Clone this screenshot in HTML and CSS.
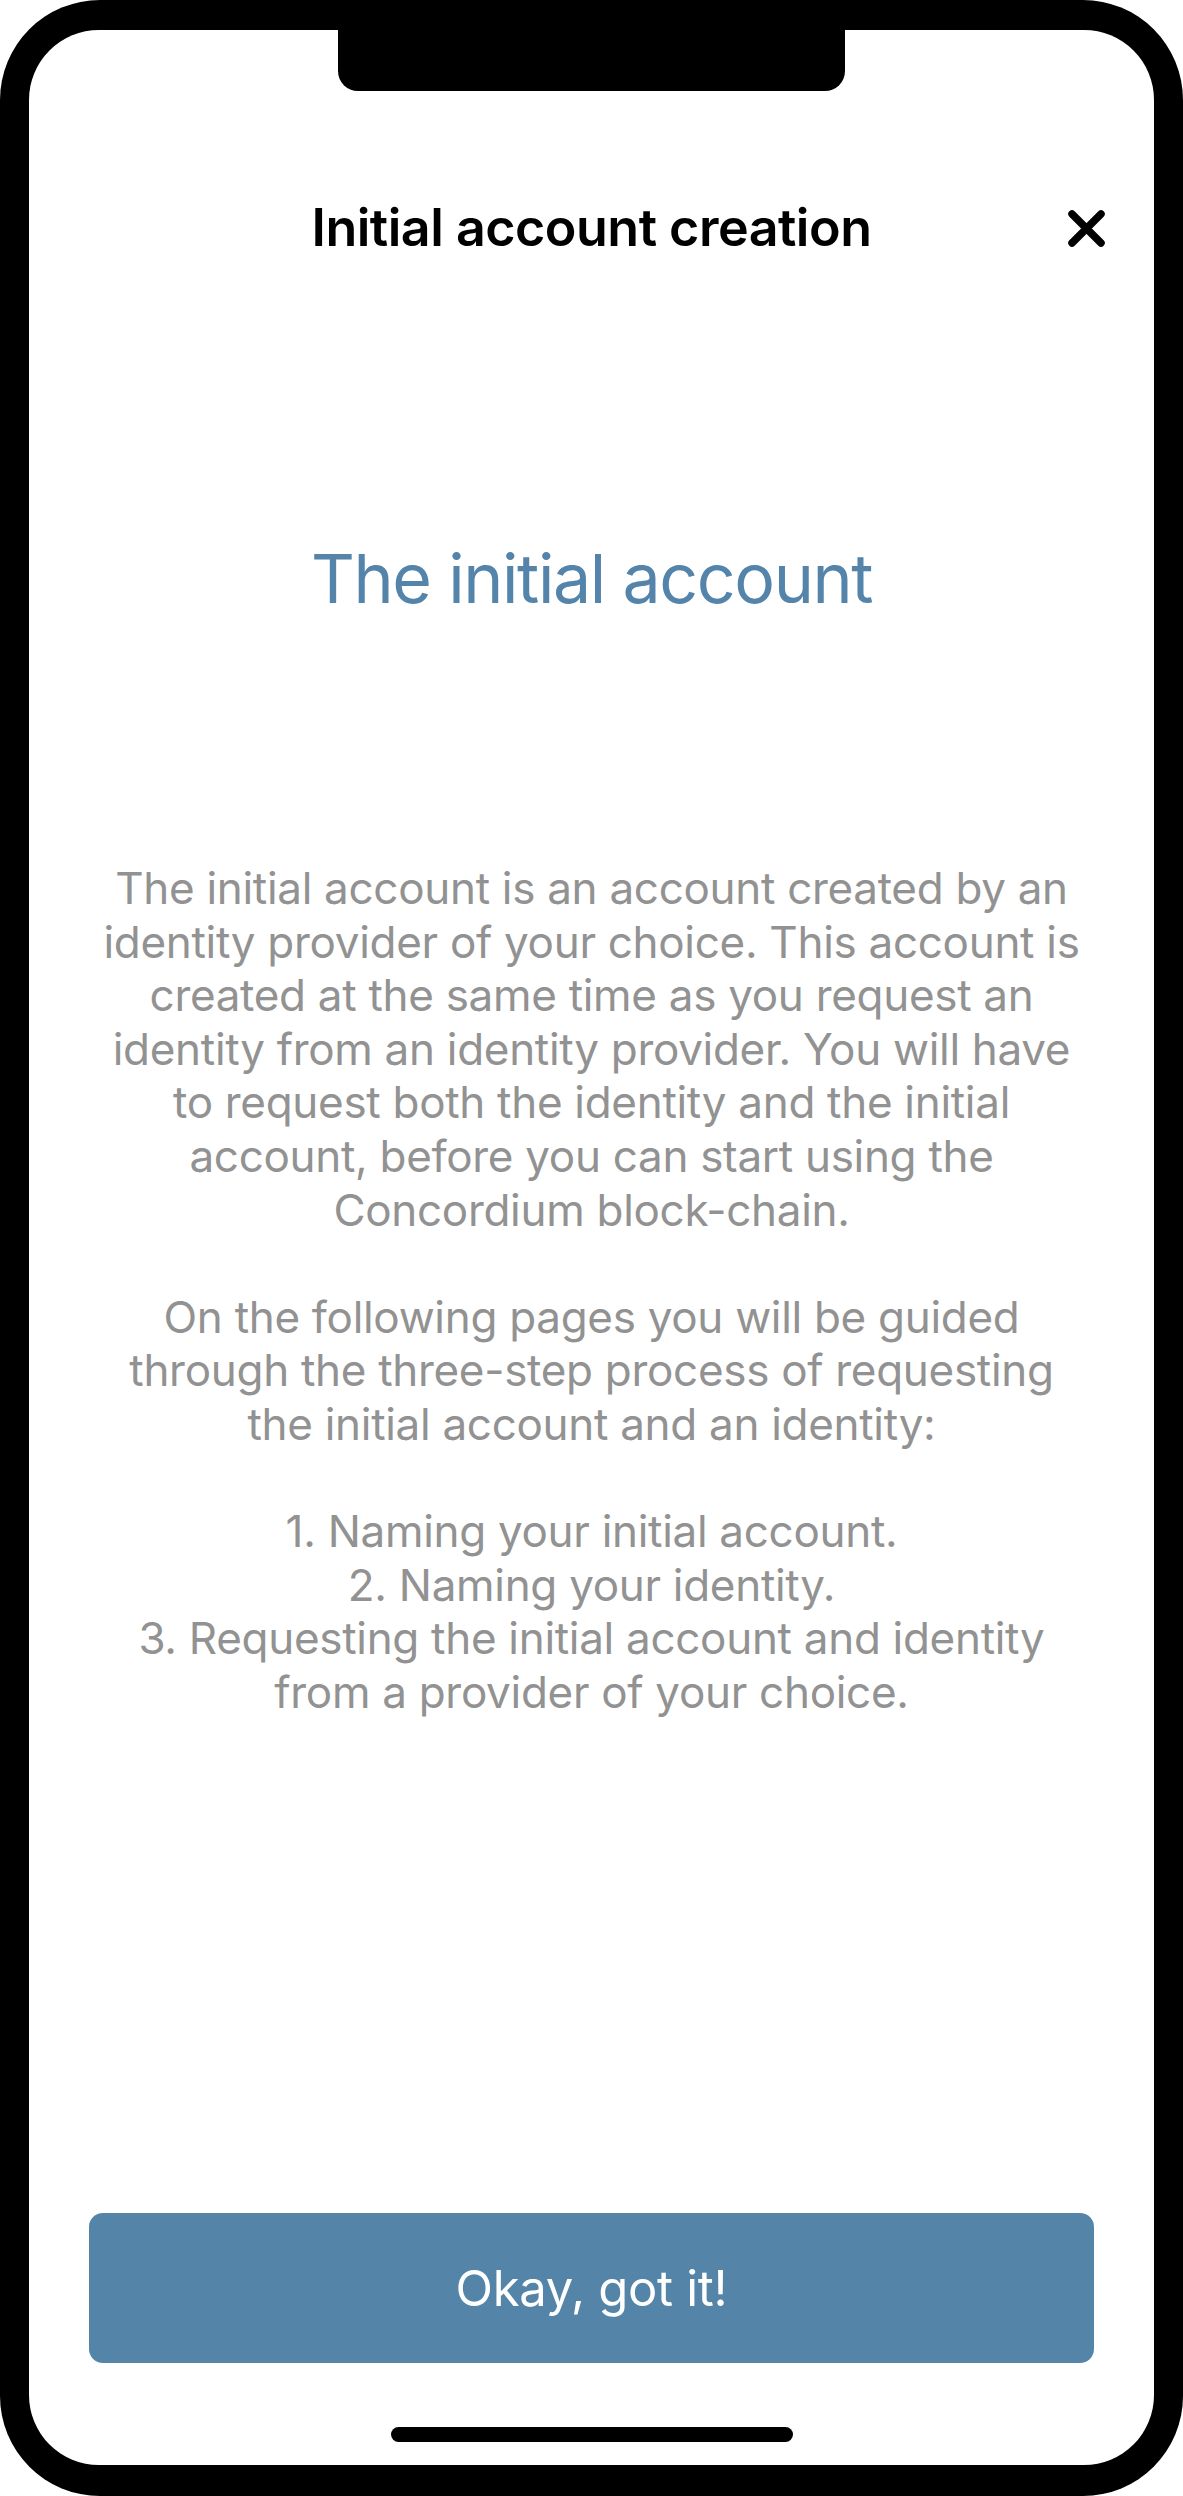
FILE: index.html
```html
<!DOCTYPE html>
<html lang="en">
<head>
<meta charset="utf-8">
<title>Initial account creation</title>
<link rel="stylesheet" href="styles.css">
</head>
<body>
<div class="phone">
  <div class="screen">
    <div class="notch"></div>
    <header class="nav">
      <span></span>
      <h1 class="nav-title">Initial account creation</h1>
      <button class="close" aria-label="Close">
        <svg width="39" height="39" viewBox="0 0 39 39"><path d="M5 5L34 34M34 5L5 34" stroke="#000" stroke-width="7.5" stroke-linecap="round" fill="none"/></svg>
      </button>
    </header>
    <main class="content">
      <h2 class="heading">The initial account</h2>
      <p class="body-text">The initial account is an account created by an<br>identity provider of your choice. This account is<br>created at the same time as you request an<br>identity from an identity provider. You will have<br>to request both the identity and the initial<br>account, before you can start using the<br>Concordium block-chain.<br><br>On the following pages you will be guided<br>through the three-step process of requesting<br>the initial account and an identity:<br><br>1. Naming your initial account.<br>2. Naming your identity.<br>3. Requesting the initial account and identity<br>from a provider of your choice.</p>
    </main>
    <footer class="footer">
      <button class="primary">Okay, got it!</button>
    </footer>
    <div class="home-indicator"></div>
  </div>
</div>
</body>
</html>
```
FILE: styles.css
```css
html, body {
  margin: 0;
  padding: 0;
  background: #fff;
}
body {
  width: 1183px;
  height: 2496px;
  font-family: "Inter", "Noto Sans", sans-serif;
}
.phone {
  box-sizing: border-box;
  width: 1183px;
  height: 2496px;
  background: #000;
  border-radius: 100px;
  padding: 30px 29px 31px 29px;
}
.screen {
  position: relative;
  height: 100%;
  background: #fff;
  border-radius: 70px;
  overflow: hidden;
  display: flex;
  flex-direction: column;
}
.notch {
  position: absolute;
  top: 0;
  left: 50%;
  margin-left: -253.5px;
  width: 507px;
  height: 61px;
  background: #000;
  border-radius: 0 0 20px 20px;
}
.nav {
  margin-top: 132px;
  height: 132px;
  padding: 0 48px;
  display: grid;
  grid-template-columns: 1fr auto 1fr;
  align-items: center;
}
.nav-title {
  margin: 0;
  font-size: 52px;
  font-weight: 600;
  line-height: 62px;
  color: #000;
  letter-spacing: -0.5px;
}
.close {
  justify-self: end;
  border: 0;
  padding: 0;
  background: none;
  width: 39px;
  height: 39px;
  display: flex;
}
.content {
  flex: 1;
  display: flex;
  flex-direction: column;
  align-items: center;
  padding: 0 60px;
}
.heading {
  margin: 242px 0 0 0;
  font-size: 68px;
  font-weight: 400;
  line-height: 84px;
  color: #5584aa;
  letter-spacing: -1.4px;
}
.body-text {
  margin: 242px 0 0 0;
  font-size: 44px;
  line-height: 53.6px;
  color: #929292;
  text-align: center;
  white-space: nowrap;
  letter-spacing: -0.3px;
}
.footer {
  padding: 0 60px 102px 60px;
}
.primary {
  width: 100%;
  height: 150px;
  border: 0;
  border-radius: 14px;
  background: #5485a9;
  color: #fff;
  font-family: "Inter", "Noto Sans", sans-serif;
  font-size: 49px;
  font-weight: 400;
  letter-spacing: -0.3px;
}
.home-indicator {
  position: absolute;
  left: 50%;
  margin-left: -201px;
  bottom: 23px;
  width: 402px;
  height: 15px;
  border-radius: 8px;
  background: #000;
}
```
